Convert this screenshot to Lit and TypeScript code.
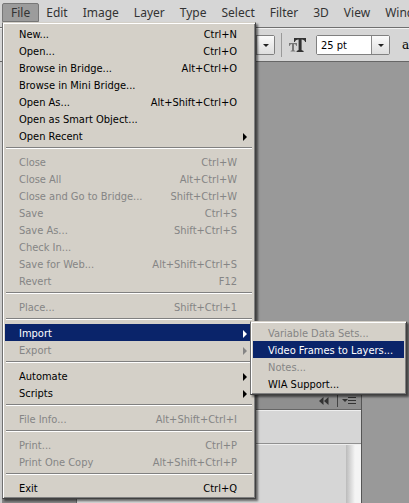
import { LitElement, html, css, nothing } from "lit";
import { customElement } from "lit/decorators.js";
import { classMap } from "lit/directives/class-map.js";

interface Entry { label: string; keys?: string; off?: boolean; sub?: boolean; on?: boolean; }

const GROUPS: Entry[][] = [
  [
    { label: "New...", keys: "Ctrl+N" },
    { label: "Open...", keys: "Ctrl+O" },
    { label: "Browse in Bridge...", keys: "Alt+Ctrl+O" },
    { label: "Browse in Mini Bridge..." },
    { label: "Open As...", keys: "Alt+Shift+Ctrl+O" },
    { label: "Open as Smart Object..." },
    { label: "Open Recent", sub: true },
  ],
  [
    { label: "Close", keys: "Ctrl+W", off: true },
    { label: "Close All", keys: "Alt+Ctrl+W", off: true },
    { label: "Close and Go to Bridge...", keys: "Shift+Ctrl+W", off: true },
    { label: "Save", keys: "Ctrl+S", off: true },
    { label: "Save As...", keys: "Shift+Ctrl+S", off: true },
    { label: "Check In...", off: true },
    { label: "Save for Web...", keys: "Alt+Shift+Ctrl+S", off: true },
    { label: "Revert", keys: "F12", off: true },
  ],
  [{ label: "Place...", keys: "Shift+Ctrl+1", off: true }],
  [
    { label: "Import", sub: true, on: true },
    { label: "Export", sub: true, off: true },
  ],
  [
    { label: "Automate", sub: true },
    { label: "Scripts", sub: true },
  ],
  [{ label: "File Info...", keys: "Alt+Shift+Ctrl+I", off: true }],
  [
    { label: "Print...", keys: "Ctrl+P", off: true },
    { label: "Print One Copy", keys: "Alt+Shift+Ctrl+P", off: true },
  ],
  [{ label: "Exit", keys: "Ctrl+Q" }],
];

const IMPORT: Entry[] = [
  { label: "Variable Data Sets...", off: true },
  { label: "Video Frames to Layers...", on: true },
  { label: "Notes...", off: true },
  { label: "WIA Support..." },
];

const BAR = ["File", "Edit", "Image", "Layer", "Type", "Select", "Filter", "3D", "View", "Window"];

@customElement("app-root")
export class AppRoot extends LitElement {
  static styles = css`
    :host { display: block; height: 100vh; overflow: hidden; position: relative; background: #999; font: 11px/17px "DejaVu Sans Condensed", "Noto Sans", sans-serif; color: #000; }
    * { box-sizing: border-box; }
    button { font: inherit; color: inherit; border: 0; background: none; margin: 0; padding: 0; text-align: left; }
    .app { height: 100%; display: flex; flex-direction: column; }
    .bar { position: relative; display: flex; flex: none; height: 28px; padding: 3px 0 0 2px; background: #d6d6d6; border-bottom: 1px solid #707070; }
    .bar > button { flex: none; height: 19px; padding: 0 8px 0 7px; font: 12px/19px "Noto Sans", sans-serif; color: #333; }
    .bar > button.open { background: #9c9c9c; border: 1px solid #777; border-radius: 2px 2px 0 0; padding: 0 8px; line-height: 17px; }
    .options { display: flex; flex: none; align-items: center; height: 34px; padding-left: 215px; background: #d6d6d6; border-top: 1px solid #f2f2f2; border-bottom: 1px solid #666; overflow: hidden; }
    .combo { display: flex; flex: none; height: 20px; border: 1px solid #808080; border-radius: 2px; background: #fff; }
    .combo input { min-width: 0; width: 54px; border: 0; padding: 0 4px; font: inherit; background: #fff; outline: 0; }
    .combo.face input { width: 40px; }
    .combo button { width: 18px; border-left: 1px solid #888; background: linear-gradient(#fafafa, #dedede); display: flex; align-items: center; justify-content: center; }
    .rule { flex: none; width: 1px; height: 24px; margin: 0 7px 0 6px; background: #999; }
    .size { flex: none; width: 18px; height: 16px; margin-right: 9px; }
    .aa { flex: none; margin-left: 12px; font: 12px/17px "DejaVu Serif", serif; }
    .work { flex: 1; display: flex; align-items: flex-end; min-height: 0; }
    .tools { width: 77px; height: 100%; background: #888; border-left: 2px solid #ccc; border-right: 1px solid #666; }
    .panel { flex: none; width: 285px; height: 110px; background: #d6d6d6; border-right: 1px solid #555; }
    .head { height: 17px; display: flex; align-items: center; justify-content: flex-end; padding-right: 4px; background: #8f8f8f; border-bottom: 1px solid #666; }
    .head svg { display: block; }
    .strip { height: 34px; border-top: 1px solid #eee; border-bottom: 1px solid #909090; }
    .list { height: 59px; display: flex; justify-content: flex-end; border-top: 1px solid #eee; }
    .scroll { width: 15px; background: linear-gradient(90deg, #bbb, #f4f4f4 60%, #f4f4f4); }
    .menu, .sub { position: absolute; background: #d4d0c8; border: 1px solid; border-color: #d4d0c8 #404040 #404040 #707070; box-shadow: inset 1px 1px #fff, inset -1px -1px #808080, 2px 2px 2px #0008; padding: 2px; }
    .menu { left: 2px; top: 22px; width: 254px; z-index: 2; }
    .sep { height: 2px; margin: 3px 1px 4px; border-top: 1px solid #808080; border-bottom: 1px solid #fff; }
    .item { display: flex; align-items: center; width: 100%; height: 17px; padding: 2px 6px 0 14px; white-space: nowrap; line-height: 15px; }
    .label { flex: 1; }
    .keys { padding-right: 10px; }
    .item.off { color: #858585; }
    .item.on { background: #0a246a; color: #fff; }
    .row { position: relative; }
    .sub { left: 245px; top: -3px; width: 157px; z-index: 3; }
    .sub .item { padding-left: 15px; }
    .arrow { display: block; }
  `;

  private item(e: Entry) {
    return html`<div class="row">
      <button class=${classMap({ item: true, off: !!e.off, on: !!e.on })} role="menuitem" aria-disabled=${e.off ? "true" : "false"}>
        <span class="label">${e.label}</span>
        ${e.keys ? html`<span class="keys">${e.keys}</span>` : nothing}
        ${e.sub ? html`<svg class="arrow" width="4" height="8"><path d="M0 0L4 4L0 8Z" fill="currentColor"/></svg>` : nothing}
      </button>
      ${e.sub && e.on ? html`<div class="sub" role="menu">${IMPORT.map((s) => this.item(s))}</div>` : nothing}
    </div>`;
  }

  private down = () => html`<svg width="6" height="3"><path d="M0 0H6L3 3Z" fill="#222"/></svg>`;

  render() {
    return html`<div class="app">
      <nav class="bar">
        ${BAR.map((b, i) => html`<button class=${classMap({ open: i === 0 })}>${b}</button>`)}
        <div class="menu" role="menu">
          ${GROUPS.map((g, i) => html`${i ? html`<div class="sep" role="separator"></div>` : nothing}${g.map((e) => this.item(e))}`)}
        </div>
      </nav>
      <div class="options">
        <div class="combo face"><input aria-label="Font style"><button aria-label="Font styles">${this.down()}</button></div>
        <div class="rule"></div>
        <svg class="size" viewBox="0 0 18 16"><path d="M0 6H8V9H7.4Q7 7 5 7V13.3L6.4 14V14.6H1.6V14L3 13.3V7Q1 7 .6 9H0Z" fill="#777"/><path d="M5 1H17V5H16.2Q15.6 2.4 12.6 2.4V13L14.6 14V15H7.6V14L9.6 13V2.4Q6.4 2.4 5.8 5H5Z" fill="#333"/></svg>
        <div class="combo"><input aria-label="Font size" value="25 pt"><button aria-label="Font sizes">${this.down()}</button></div>
        <span class="aa">a</span>
      </div>
      <main class="work">
        <div class="tools"></div>
        <section class="panel">
          <div class="head"><svg width="38" height="12"><path d="M4.500 2V10L0 6ZM9.500 2V10L5 6Z" fill="#333"/><path d="M18.500 0V12" stroke="#444"/><path d="M23 4H29L26 7Z" fill="#333"/><path d="M29 2.500H37M29 5.500H37M29 8.500H37" stroke="#333"/></svg></div>
          <div class="strip"></div>
          <div class="list"><div class="scroll"></div></div>
        </section>
      </main>
    </div>`;
  }
}
